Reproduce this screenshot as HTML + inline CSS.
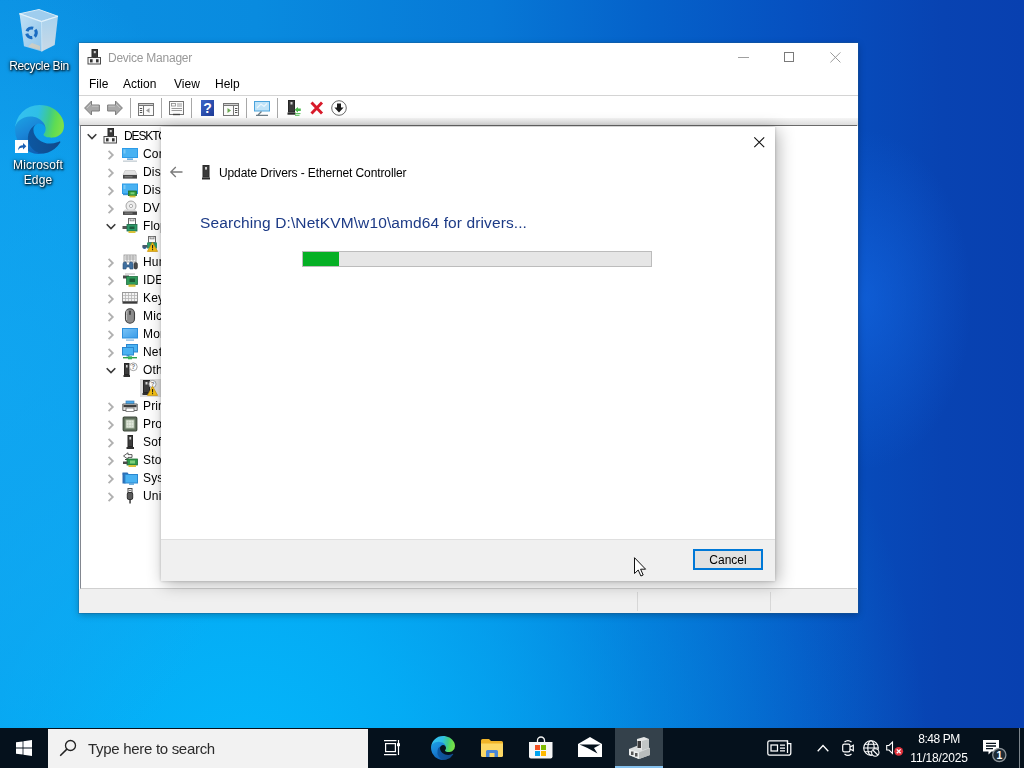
<!DOCTYPE html>
<html><head><meta charset="utf-8"><title>Device Manager</title>
<style>
*{box-sizing:border-box;margin:0;padding:0}
html,body{width:1024px;height:768px;overflow:hidden}
body{position:relative;font-family:"Liberation Sans",sans-serif;font-size:12px;color:#000;
background:
 radial-gradient(ellipse 110px 170px at 862px 300px,rgba(20,105,230,.6),rgba(20,105,230,0) 100%),
 radial-gradient(ellipse 260px 420px at 0px 380px,rgba(18,168,242,.78),rgba(18,168,242,.62) 50%,rgba(18,168,242,0) 100%),
 radial-gradient(ellipse 680px 720px at 250px 790px,rgba(4,184,252,.97),rgba(3,182,251,.8) 25%,rgba(2,176,248,.42) 60%,rgba(0,170,245,0) 100%),
 linear-gradient(90deg,#0b91e3 0,#098bdf 25%,#0778d6 48%,#0562ca 63%,#0650c0 78%,#0843b2 92%,#0840b0 100%);}
.abs{position:absolute}
svg{display:block;overflow:visible}
.dlabel{color:#fff;font-size:12px;text-align:center;text-shadow:1px 1px 2px rgba(0,0,0,.95),0 1px 3px rgba(0,0,0,.7),0 0 4px rgba(0,0,0,.5);line-height:15px;white-space:nowrap}
#dm{left:79px;top:43px;width:779px;height:570px;background:#fff;box-shadow:0 0 0 1px rgba(30,90,140,.35),0 2px 7px rgba(0,0,0,.28)}
#dm .title{left:29px;top:7px;color:#999;font-size:12px;line-height:16px;white-space:nowrap;letter-spacing:-.24px}
.menu span{position:absolute;top:0;line-height:16px;white-space:nowrap}
#tb{left:0;top:52px;width:779px;height:23px;border-top:1px solid #d4d4d4;background:#fff}
.sep{position:absolute;top:55px;width:1px;height:20px;background:#a8a8a8}
#gap{left:0;top:75px;width:779px;height:8px;background:linear-gradient(180deg,#f5f5f5,#d9d9d9)}
#tree{left:1px;top:82px;width:777px;height:464px;background:#fff;border-top:1px solid #6a6a6a;border-left:1px solid #828790;border-bottom:1px solid #d0d0d0}
#status{left:0;top:546px;width:779px;height:24px;background:#f0f0f0}
.row{position:absolute;height:18px;line-height:18px;font-size:12px;white-space:nowrap;letter-spacing:-.1px}
#dlg{left:161px;top:127px;width:614px;height:454px;background:#fff;box-shadow:3px 3px 16px rgba(0,0,0,.30),0 0 3px rgba(0,0,0,.22)}
#dlg .foot{left:0;top:412px;width:614px;height:42px;background:#f0f0f0;border-top:1px solid #dfdfdf}
#cancel{left:532px;top:422px;width:70px;height:21px;background:#e1e1e1;border:2px solid #0078d7;text-align:center;line-height:17px;font-size:12px;padding-top:1px}
#task{left:0;top:728px;width:1024px;height:40px;background:#05111c}
#search{left:48px;top:729px;width:320px;height:39px;background:#f2f2f2}
.clock{color:#fff;font-size:12px;line-height:15px;text-align:center;white-space:nowrap}
.dlabel,.title,.menu,.row,.clock,#cancel,.txt,#search span{will-change:transform}
</style></head><body>
<!-- desktop icons -->
<svg class="abs" style="left:18px;top:8px" width="42" height="46" viewBox="0 0 42 46"><defs><linearGradient id="rb1" x1="0" y1="0" x2="1" y2="1"><stop offset="0" stop-color="#bfe0f5"/><stop offset="1" stop-color="#8fc4ea"/></linearGradient>
<linearGradient id="rb2" x1="0" y1="0" x2="0" y2="1"><stop offset="0" stop-color="#a9d2ee"/><stop offset="1" stop-color="#c9d9e6"/></linearGradient></defs>
<path d="M1.500 5.800 L21 1.500 L40 8.300 L23.500 13.500 Z" fill="#9fcdee" stroke="#d5ebf8" stroke-width="1"/>
<path d="M1.500 5.800 L23.500 13.500 L23.800 43.500 L6 38.200 Z" fill="url(#rb1)"/>
<path d="M23.500 13.500 L40 8.300 L36.700 37 L23.800 43.500 Z" fill="url(#rb2)"/>
<path d="M1.500 5.800 L23.500 13.500 L40 8.300" fill="none" stroke="#e3f2fb" stroke-width="1.200"/>
<path d="M23.500 13.500 L23.800 43.500" stroke="#d7ebf8" stroke-width=".8"/>
<g fill="none" stroke="#1a6cc2" stroke-width="3.100"><path d="M8.99 23.16 A4.8 4.8 0 0 1 15.14 20.29"/><path d="M17.18 21.71 A4.8 4.8 0 0 1 16.59 28.48"/><path d="M14.33 29.53 A4.8 4.8 0 0 1 8.77 25.63"/></g>
<path d="M14 35 L22 38 L22 42 L10 38.500 Z" fill="#f1cfa5" opacity=".55"/></svg>
<div class="abs dlabel" style="left:0;top:59px;width:78px;letter-spacing:-.33px">Recycle Bin</div>
<svg class="abs" style="left:15px;top:105px" width="49" height="49" viewBox="0 0 256 256"><defs>
<linearGradient id="eg1" x1="58" y1="180" x2="237" y2="180" gradientUnits="userSpaceOnUse"><stop offset="0" stop-color="#0c59a4"/><stop offset="1" stop-color="#114a8b"/></linearGradient>
<linearGradient id="eg2" x1="20" y1="80" x2="120" y2="250" gradientUnits="userSpaceOnUse"><stop offset="0" stop-color="#1b9de2"/><stop offset=".4" stop-color="#1a86d8"/><stop offset="1" stop-color="#0f5fb4"/></linearGradient>
<linearGradient id="eg3" x1="10" y1="60" x2="250" y2="110" gradientUnits="userSpaceOnUse"><stop offset="0" stop-color="#35c1f1"/><stop offset=".45" stop-color="#2fbfe6"/><stop offset=".7" stop-color="#3fcb8a"/><stop offset=".85" stop-color="#5fdc52"/><stop offset="1" stop-color="#7ae04a"/></linearGradient>
</defs>
<g transform="translate(-4.630 -4.920)">
<path d="M235.680 195.460a93.730 93.730 0 01-10.540 4.710 101.870 101.870 0 01-35.900 6.460c-47.320 0-88.540-32.550-88.540-74.320A31.480 31.480 0 01117.130 105c-42.800 1.800-53.800 46.400-53.800 72.530 0 73.880 68.090 81.370 82.760 81.370 7.910 0 19.840-2.300 27-4.560l1.310-.44a128.340 128.340 0 0066.600-52.800 4 4 0 00-5.320-5.640z" fill="url(#eg1)"/>
<path d="M110.340 246.340A79.200 79.200 0 0187.600 225a80.720 80.720 0 0129.530-120c3.120-1.470 8.450-4.130 15.540-4a32.350 32.350 0 0125.690 13 31.880 31.880 0 016.360 18.660c0-.21 24.460-79.600-80-79.600-43.900 0-80 41.660-80 78.210a130.150 130.150 0 0012.110 56 128 128 0 00156.380 67.110 75.550 75.550 0 01-62.780-8z" fill="url(#eg2)"/>
<path d="M156.940 153.780c-.81 1.050-3.300 2.500-3.300 5.660 0 2.610 1.700 5.120 4.720 7.230 14.380 10 41.490 8.680 41.560 8.680a59.560 59.560 0 0030.270-8.350 61.380 61.380 0 0030.430-52.880c.26-22.410-8-37.310-11.340-43.910-21.190-41.450-66.930-65.290-116.670-65.290a128 128 0 00-128 126.200c.48-36.540 36.800-66.050 80-66.050 3.500 0 23.460.34 42 10.070 16.340 8.580 24.900 18.940 30.850 29.210 6.180 10.670 7.280 24.150 7.280 29.520s-2.740 13.330-7.800 19.910z" fill="url(#eg3)"/>
</g></svg>
<svg class="abs" style="left:15px;top:140px" width="13" height="13" viewBox="0 0 13 13"><rect width="13" height="13" fill="#fff"/><path d="M3 10.500 C3 7 5 5.200 8 5.200 L8 3 L11.300 6.300 L8 9.600 L8 7.400 C6 7.400 4.200 8 3 10.500 Z" fill="#1a5fb4"/></svg>
<div class="abs dlabel" style="left:0;top:158px;width:76px;letter-spacing:.15px">Microsoft<br>Edge</div>

<!-- Device Manager window -->
<div id="dm" class="abs">
 <svg class="abs" style="left:8px;top:6px" width="16" height="16" viewBox="0 0 16 16"><rect x="5" y="0.500" width="5.500" height="8" fill="#3a3a3a" stroke="#2a2a2a"/><rect x="6.800" y="2" width="2" height="2.200" fill="#cfcfcf"/>
<rect x="1" y="8.500" width="12.500" height="6.500" fill="#f4f4f4" stroke="#4a4a4a"/><rect x="3" y="10.200" width="2.600" height="3.200" fill="#333"/><rect x="9" y="10.200" width="2.600" height="3.200" fill="#333"/><rect x="6" y="6" width="3.500" height="3" fill="#3a3a3a"/></svg>
 <div class="abs title">Device Manager</div>
 <svg class="abs" style="left:659px;top:14px" width="12" height="2" viewBox="0 0 12 2"><rect width="11" height="1" y="0" fill="#a0a0a0"/></svg>
 <svg class="abs" style="left:705px;top:9px" width="11" height="11" viewBox="0 0 11 11"><rect x=".5" y=".5" width="9" height="9" fill="none" stroke="#7a7a7a"/></svg>
 <svg class="abs" style="left:751px;top:9px" width="11" height="11" viewBox="0 0 11 11"><path d="M.4 .4 L10.400 10.400 M10.400 .4 L.4 10.400" stroke="#9a9a9a" stroke-width="1"/></svg>
 <div class="abs menu" style="left:0;top:33px;width:300px;height:16px">
  <span style="left:10px">File</span><span style="left:44px">Action</span><span style="left:95px">View</span><span style="left:136px">Help</span>
 </div>
 <div id="tb" class="abs"></div>
 <svg class="abs" style="left:5px;top:57px" width="16" height="16" viewBox="0 0 16 16"><path d="M.6 8 L7.500 1 L7.500 5 L15.400 5 L15.400 11 L7.500 11 L7.500 15 Z" fill="#a8a8a8" stroke="#7e7e7e" stroke-width="1" stroke-linejoin="round"/><path d="M3 8 L7 4 M8 6.200 L14.500 6.200" stroke="#c4c4c4" stroke-width="1" fill="none"/></svg>
<svg class="abs" style="left:28px;top:57px" width="16" height="16" viewBox="0 0 16 16"><g transform="translate(16 0) scale(-1 1)"><path d="M.6 8 L7.500 1 L7.500 5 L15.400 5 L15.400 11 L7.500 11 L7.500 15 Z" fill="#a8a8a8" stroke="#7e7e7e" stroke-width="1" stroke-linejoin="round"/><path d="M3 8 L7 4 M8 6.200 L14.500 6.200" stroke="#c4c4c4" stroke-width="1" fill="none"/></g></svg>
<div class="sep" style="left:51px"></div>
<div class="sep" style="left:82px"></div>
<div class="sep" style="left:112px"></div>
<div class="sep" style="left:167px"></div>
<div class="sep" style="left:198px"></div>
<svg class="abs" style="left:59px;top:57px" width="16" height="16" viewBox="0 0 16 16"><rect x=".5" y="3.500" width="15" height="12" fill="#fbfbfb" stroke="#757575"/><rect x=".5" y="3.500" width="15" height="2" fill="#cfcfcf" stroke="#757575"/><path d="M5.500 6 V15" stroke="#757575"/><path d="M1.800 8.500 h2.400 M1.800 10.500 h2.400 M1.800 12.500 h2.400" stroke="#555" stroke-width="1"/><path d="M11.500 8 L8 10.500 L11.500 13 Z" fill="#9a9a9a"/></svg>
<svg class="abs" style="left:90px;top:57px" width="16" height="16" viewBox="0 0 16 16"><rect x=".5" y="1.500" width="14" height="13" fill="#fbfbfb" stroke="#757575"/><rect x="2.500" y="3.500" width="4" height="2.500" fill="none" stroke="#8a8a8a" stroke-width=".8"/><path d="M8 4 h5 M8 6 h5 M2.500 8.500 h10.500 M2.500 10.500 h10.500" stroke="#9a9a9a" stroke-width="1"/><path d="M4 14.500 h7" stroke="#444" stroke-width="1.400"/></svg>
<svg class="abs" style="left:122px;top:57px" width="13" height="16" viewBox="0 0 13 16"><defs><linearGradient id="hp" x1="0" y1="0" x2="1" y2="1"><stop offset="0" stop-color="#3c66c8"/><stop offset="1" stop-color="#1d3a96"/></linearGradient></defs><rect x="0" y="0" width="13" height="16" fill="url(#hp)"/><text x="6.500" y="13" font-family="Liberation Sans,sans-serif" font-weight="bold" font-size="14" fill="#fff" text-anchor="middle">?</text></svg>
<svg class="abs" style="left:144px;top:57px" width="16" height="16" viewBox="0 0 16 16"><rect x=".5" y="3.500" width="15" height="12" fill="#fbfbfb" stroke="#757575"/><rect x=".5" y="3.500" width="15" height="2" fill="#cfcfcf" stroke="#757575"/><path d="M10.500 6 V15" stroke="#757575"/><path d="M12 8.500 h2.400 M12 10.500 h2.400 M12 12.500 h2.400" stroke="#555" stroke-width="1"/><path d="M4.500 8 L8 10.500 L4.500 13 Z" fill="#6aa84f"/></svg>
<svg class="abs" style="left:175px;top:57px" width="16" height="16" viewBox="0 0 16 16"><rect x=".5" y="1.500" width="15" height="9.500" fill="#bfe3f8" stroke="#4aa3dc"/><path d="M3 8 L7 4 L10 6.500 L13 3.500" stroke="#eaf6fd" stroke-width="1.200" fill="none"/><path d="M7.500 11.500 L4 15 M2 15.300 h12" stroke="#6e7e88" stroke-width="1.300"/></svg>
<svg class="abs" style="left:208px;top:57px" width="16" height="16" viewBox="0 0 16 16"><rect x="1.500" y=".5" width="6" height="11.500" fill="#3a3a3a" stroke="#262626"/><rect x="3.500" y="2" width="2" height="2.500" fill="#d0d0d0"/><rect x=".5" y="12.500" width="8" height="2.200" fill="#2a2a2a"/><path d="M7.500 9.800 L11 7 L11 8.600 L13.800 8.600 L13.800 11 L11 11 L11 12.600 Z" fill="#4dbb4d"/><path d="M8 13.600 h5.500 M8 15.300 h4.500" stroke="#58c058" stroke-width="1"/></svg>
<svg class="abs" style="left:230px;top:57px" width="16" height="16" viewBox="0 0 16 16"><path d="M2.500 2.500 L13 13.500 M13 2.500 L2.500 13.500" stroke="#d81a2a" stroke-width="2.900" stroke-linecap="butt"/></svg>
<svg class="abs" style="left:252px;top:57px" width="16" height="16" viewBox="0 0 16 16"><circle cx="8" cy="8" r="7.300" fill="#fff" stroke="#6a6a6a" stroke-width="1"/><path d="M6 3.500 h4 v4 h2.600 L8 12.500 L3.400 7.500 H6 Z" fill="#1a1a1a"/></svg>
 <div id="gap" class="abs"></div>
 <div id="tree" class="abs"></div>
 <div id="status" class="abs">
  <div class="abs" style="left:558px;top:3px;width:1px;height:19px;background:#d7d7d7"></div>
  <div class="abs" style="left:691px;top:3px;width:1px;height:19px;background:#d7d7d7"></div>
 </div>
</div>
<svg class="abs" style="left:87px;top:131px" width="10" height="10" viewBox="0 0 10 10"><path d="M0.7 3.3 L5 7.6 L9.3 3.3" fill="none" stroke="#3a3a3a" stroke-width="1.6"/></svg>
<svg class="abs" style="left:103px;top:128px" width="16" height="16" viewBox="0 0 16 16"><rect x="5" y="0.500" width="5.500" height="8" fill="#3a3a3a" stroke="#2a2a2a"/><rect x="6.800" y="2" width="2" height="2.200" fill="#cfcfcf"/>
<rect x="1" y="8.500" width="12.500" height="6.500" fill="#f4f4f4" stroke="#4a4a4a"/><rect x="3" y="10.200" width="2.600" height="3.200" fill="#333"/><rect x="9" y="10.200" width="2.600" height="3.200" fill="#333"/><rect x="6" y="6" width="3.500" height="3" fill="#3a3a3a"/></svg>
<div class="row" style="left:124px;top:127px;letter-spacing:-1.1px">DESKTOP-7QK2M1A</div>
<svg class="abs" style="left:106px;top:150px" width="10" height="10" viewBox="0 0 10 10"><path d="M2.6 0.8 L6.8 5 L2.6 9.2" fill="none" stroke="#b0b0b0" stroke-width="1.8"/></svg>
<svg class="abs" style="left:122px;top:146px" width="16" height="16" viewBox="0 0 16 16"><rect x="0.5" y="2.500" width="15" height="9" fill="#49b2f2" stroke="#2d9be8"/><rect x="1.5" y="3.500" width="2" height="4" fill="#8fd3fa" opacity=".7"/><rect x="5" y="12.500" width="6" height="1.2" fill="#3a8fd0"/><rect x="1" y="14.500" width="14" height="1.300" fill="#c3ccd3"/></svg>
<div class="row" style="left:143px;top:145px;letter-spacing:.15px">Computer</div>
<svg class="abs" style="left:106px;top:168px" width="10" height="10" viewBox="0 0 10 10"><path d="M2.6 0.8 L6.8 5 L2.6 9.2" fill="none" stroke="#b0b0b0" stroke-width="1.8"/></svg>
<svg class="abs" style="left:122px;top:164px" width="16" height="16" viewBox="0 0 16 16"><path d="M3 6.5 L13 6.5 L15 11 L1 11 Z" fill="#e2e2e2" stroke="#bdbdbd" stroke-width=".6"/><rect x="1" y="11" width="14" height="3.6" fill="#454545"/><rect x="2.5" y="12.3" width="8" height="1" fill="#8a8a8a"/></svg>
<div class="row" style="left:143px;top:163px;letter-spacing:.15px">Disk drives</div>
<svg class="abs" style="left:106px;top:186px" width="10" height="10" viewBox="0 0 10 10"><path d="M2.6 0.8 L6.8 5 L2.6 9.2" fill="none" stroke="#b0b0b0" stroke-width="1.8"/></svg>
<svg class="abs" style="left:122px;top:182px" width="16" height="16" viewBox="0 0 16 16"><rect x="0.5" y="2" width="15" height="9.500" fill="#49b2f2" stroke="#2d9be8"/><rect x="1.5" y="3" width="2" height="4" fill="#8fd3fa" opacity=".7"/><rect x="1" y="12" width="5" height="1.2" fill="#3a8fd0"/><rect x="6.500" y="9" width="8" height="4.600" fill="#2f9a3a" stroke="#1d6e27" stroke-width=".8"/><rect x="7.500" y="13.600" width="6" height="1.800" fill="#d8c23a"/><rect x="8.500" y="10.300" width="4" height="2" fill="#7ed07a"/></svg>
<div class="row" style="left:143px;top:181px;letter-spacing:.15px">Display adapters</div>
<svg class="abs" style="left:106px;top:204px" width="10" height="10" viewBox="0 0 10 10"><path d="M2.6 0.8 L6.8 5 L2.6 9.2" fill="none" stroke="#b0b0b0" stroke-width="1.8"/></svg>
<svg class="abs" style="left:122px;top:200px" width="16" height="16" viewBox="0 0 16 16"><circle cx="9" cy="6" r="5" fill="#ededed" stroke="#9b9b9b" stroke-width=".9"/><circle cx="9" cy="6" r="1.6" fill="#fff" stroke="#9b9b9b" stroke-width=".8"/><path d="M3 9.5 L13 9.5 L15 11.5 L1 11.5 Z" fill="#d8d8d8"/><rect x="1" y="11.5" width="14" height="3.4" fill="#454545"/><rect x="2.5" y="12.6" width="8" height="1" fill="#8a8a8a"/></svg>
<div class="row" style="left:143px;top:199px;letter-spacing:.15px">DVD/CD-ROM drives</div>
<svg class="abs" style="left:106px;top:221px" width="10" height="10" viewBox="0 0 10 10"><path d="M0.7 3.3 L5 7.6 L9.3 3.3" fill="none" stroke="#3a3a3a" stroke-width="1.6"/></svg>
<svg class="abs" style="left:122px;top:218px" width="16" height="16" viewBox="0 0 16 16"><rect x="6.5" y="0.5" width="7" height="6" fill="#fff" stroke="#6a6a6a"/><rect x="8" y="0.5" width="4" height="2.4" fill="#d9d9d9" stroke="#6a6a6a" stroke-width=".6"/><rect x="0.5" y="8" width="5" height="3" fill="#555"/><rect x="5" y="6.5" width="10" height="6.5" fill="#2f9a6a" stroke="#1f6e4a" stroke-width=".8"/><rect x="7.5" y="8.5" width="5" height="2.5" fill="#1c5c3c"/><rect x="6.5" y="13" width="7" height="2" fill="#d8c23a"/></svg>
<div class="row" style="left:143px;top:217px;letter-spacing:.15px">Floppy drive controllers</div>
<svg class="abs" style="left:142px;top:236px" width="16" height="16" viewBox="0 0 16 16"><rect x="6.5" y="0.5" width="7" height="6" fill="#fff" stroke="#6a6a6a"/><rect x="8" y="0.5" width="4" height="2.4" fill="#d9d9d9" stroke="#6a6a6a" stroke-width=".6"/><rect x="5" y="6.5" width="10" height="6" fill="#2f9a6a"/><circle cx="2.5" cy="11" r="2" fill="#2d5f9a"/><rect x="0.5" y="9" width="5" height="2.5" fill="#4a5a6a"/><path d="M10.5 6.2 L15.6 15.4 L5.4 15.4 Z" fill="#f6c313" stroke="#c98f06" stroke-width=".7" stroke-linejoin="round"/><rect x="10" y="9" width="1.1" height="3.4" fill="#222"/><rect x="10" y="13.1" width="1.1" height="1.1" fill="#222"/></svg>
<div class="row" style="left:164px;top:235px;letter-spacing:.15px">Standard floppy disk controller</div>
<svg class="abs" style="left:106px;top:258px" width="10" height="10" viewBox="0 0 10 10"><path d="M2.6 0.8 L6.8 5 L2.6 9.2" fill="none" stroke="#b0b0b0" stroke-width="1.8"/></svg>
<svg class="abs" style="left:122px;top:254px" width="16" height="16" viewBox="0 0 16 16"><rect x="2" y="1" width="12" height="7" fill="#f2f2f2" stroke="#8f8f8f" stroke-width=".8"/><path d="M3 3h10M3 5h10M5 1v6M8 1v6M11 1v6" stroke="#9a9a9a" stroke-width=".7"/><path d="M1 15 L1 10 Q1 8 3 8 L4 8 L5 11 L7 11 L8 8 L9 8 Q11 8 11 10 L11 15 L8 15 L7.5 13 L4.5 13 L4 15 Z" fill="#3f6f9f" stroke="#2b4f77" stroke-width=".6"/><rect x="12" y="8.5" width="3.4" height="6.5" rx="1.6" fill="#4a4a4a" stroke="#2a2a2a" stroke-width=".6"/></svg>
<div class="row" style="left:143px;top:253px;letter-spacing:.15px">Human Interface Devices</div>
<svg class="abs" style="left:106px;top:276px" width="10" height="10" viewBox="0 0 10 10"><path d="M2.6 0.8 L6.8 5 L2.6 9.2" fill="none" stroke="#b0b0b0" stroke-width="1.8"/></svg>
<svg class="abs" style="left:122px;top:272px" width="16" height="16" viewBox="0 0 16 16"><rect x="3" y="1" width="10" height="2" fill="#d9d9d9"/><rect x="1" y="3.5" width="6" height="3" fill="#4a4a4a"/><rect x="4.5" y="4.5" width="11" height="8" fill="#2f9a5a" stroke="#1f6e3f" stroke-width=".8"/><rect x="7.5" y="6.5" width="5.5" height="3.5" fill="#1c5c36"/><rect x="6.5" y="12.5" width="7" height="2.3" fill="#d8c23a"/></svg>
<div class="row" style="left:143px;top:271px;letter-spacing:.15px">IDE ATA/ATAPI controllers</div>
<svg class="abs" style="left:106px;top:294px" width="10" height="10" viewBox="0 0 10 10"><path d="M2.6 0.8 L6.8 5 L2.6 9.2" fill="none" stroke="#b0b0b0" stroke-width="1.8"/></svg>
<svg class="abs" style="left:122px;top:290px" width="16" height="16" viewBox="0 0 16 16"><rect x="0.5" y="2.5" width="15" height="9" fill="#f3f3f3" stroke="#9a9a9a"/><path d="M1 5.5h14M1 8.5h14M3.5 3v8M6.5 3v8M9.500 3v8M12.500 3v8" stroke="#b5b5b5" stroke-width=".8"/><rect x="0.500" y="11.500" width="15" height="2.200" fill="#3c3c3c"/></svg>
<div class="row" style="left:143px;top:289px;letter-spacing:.15px">Keyboards</div>
<svg class="abs" style="left:106px;top:312px" width="10" height="10" viewBox="0 0 10 10"><path d="M2.6 0.8 L6.8 5 L2.6 9.2" fill="none" stroke="#b0b0b0" stroke-width="1.8"/></svg>
<svg class="abs" style="left:122px;top:308px" width="16" height="16" viewBox="0 0 16 16"><rect x="3.500" y="0.800" width="9" height="14.400" rx="4.500" fill="#8c8c8c" stroke="#3e3e3e" stroke-width="1.100"/><rect x="7.200" y="2.500" width="1.600" height="4.500" rx=".8" fill="#3a3a3a"/><path d="M5 2.500 Q4.300 6 4.600 12" stroke="#c9c9c9" stroke-width="1" fill="none"/></svg>
<div class="row" style="left:143px;top:307px;letter-spacing:.15px">Mice and other pointing devices</div>
<svg class="abs" style="left:106px;top:330px" width="10" height="10" viewBox="0 0 10 10"><path d="M2.6 0.8 L6.8 5 L2.6 9.2" fill="none" stroke="#b0b0b0" stroke-width="1.8"/></svg>
<svg class="abs" style="left:122px;top:326px" width="16" height="16" viewBox="0 0 16 16"><defs><linearGradient id="mg" x1="0" y1="0" x2="1" y2="1"><stop offset="0" stop-color="#79c4f7"/><stop offset="1" stop-color="#3a9ce8"/></linearGradient></defs><rect x="0.5" y="2.500" width="15" height="9.500" fill="url(#mg)" stroke="#2d8fdc"/><rect x="4" y="13.500" width="8" height="1.200" fill="#7fb4de"/></svg>
<div class="row" style="left:143px;top:325px;letter-spacing:.15px">Monitors</div>
<svg class="abs" style="left:106px;top:348px" width="10" height="10" viewBox="0 0 10 10"><path d="M2.6 0.8 L6.8 5 L2.6 9.2" fill="none" stroke="#b0b0b0" stroke-width="1.8"/></svg>
<svg class="abs" style="left:122px;top:344px" width="16" height="16" viewBox="0 0 16 16"><rect x="4.500" y="0.500" width="11" height="7.500" fill="#49b2f2" stroke="#2b86cf"/><rect x="0.500" y="3.500" width="11" height="7.500" fill="#49b2f2" stroke="#2b86cf"/><rect x="4.500" y="11" width="3" height="1.500" fill="#3a8fd0"/><rect x="1" y="13" width="14" height="1.400" fill="#2e9f4a"/><rect x="6" y="12.300" width="4" height="3" fill="#37b457"/></svg>
<div class="row" style="left:143px;top:343px;letter-spacing:.15px">Network adapters</div>
<svg class="abs" style="left:106px;top:365px" width="10" height="10" viewBox="0 0 10 10"><path d="M0.7 3.3 L5 7.6 L9.3 3.3" fill="none" stroke="#3a3a3a" stroke-width="1.6"/></svg>
<svg class="abs" style="left:122px;top:362px" width="16" height="16" viewBox="0 0 16 16"><rect x="2.500" y="1.500" width="4.500" height="11" fill="#3c3c3c" stroke="#262626"/><rect x="4" y="3" width="1.600" height="2.500" fill="#d5d5d5"/><rect x="1.500" y="13" width="6.500" height="2" fill="#2f2f2f"/><circle cx="11.300" cy="4.800" r="3.900" fill="#fff" stroke="#9a9a9a" stroke-width=".9"/><text x="11.300" y="7.100" font-size="6.500" font-family="Liberation Sans,sans-serif" text-anchor="middle" fill="#777" font-weight="bold">?</text></svg>
<div class="row" style="left:143px;top:361px;letter-spacing:.15px">Other devices</div>
<div class="abs" style="left:140px;top:379px;width:140px;height:18px;background:#dedede"></div>
<svg class="abs" style="left:142px;top:380px" width="16" height="16" viewBox="0 0 16 16"><rect x="1.500" y="0.500" width="6" height="12" fill="#3c3c3c" stroke="#262626"/><rect x="3.500" y="2" width="2" height="2.500" fill="#d5d5d5"/><rect x="0.500" y="13" width="8" height="2" fill="#2f2f2f"/><circle cx="10.500" cy="4" r="3.600" fill="#fff" stroke="#9a9a9a" stroke-width=".9"/><text x="10.500" y="6.200" font-size="6" font-family="Liberation Sans,sans-serif" text-anchor="middle" fill="#777" font-weight="bold">?</text><path d="M10.5 6.2 L15.6 15.4 L5.4 15.4 Z" fill="#f6c313" stroke="#c98f06" stroke-width=".7" stroke-linejoin="round"/><rect x="10" y="9" width="1.1" height="3.4" fill="#222"/><rect x="10" y="13.1" width="1.1" height="1.1" fill="#222"/></svg>
<div class="row" style="left:164px;top:379px;letter-spacing:.15px">Ethernet Controller</div>
<svg class="abs" style="left:106px;top:402px" width="10" height="10" viewBox="0 0 10 10"><path d="M2.6 0.8 L6.8 5 L2.6 9.2" fill="none" stroke="#b0b0b0" stroke-width="1.8"/></svg>
<svg class="abs" style="left:122px;top:398px" width="16" height="16" viewBox="0 0 16 16"><rect x="4" y="3" width="8" height="3.500" fill="#4aa8ea" stroke="#3b7fb8" stroke-width=".7"/><path d="M0.800 6 h14.400 v6.500 h-14.400 Z" fill="#e4e4e4" stroke="#555" stroke-width=".9"/><rect x="1.500" y="7" width="13" height="2.200" fill="#3e3e3e"/><rect x="4" y="10" width="8" height="3.500" fill="#fff" stroke="#6a6a6a" stroke-width=".8"/></svg>
<div class="row" style="left:143px;top:397px;letter-spacing:.15px">Print queues</div>
<svg class="abs" style="left:106px;top:420px" width="10" height="10" viewBox="0 0 10 10"><path d="M2.6 0.8 L6.8 5 L2.6 9.2" fill="none" stroke="#b0b0b0" stroke-width="1.8"/></svg>
<svg class="abs" style="left:122px;top:416px" width="16" height="16" viewBox="0 0 16 16"><rect x="1.200" y="1.200" width="13.600" height="13.600" rx="1" fill="#5f6f5c" stroke="#3f4b3c" stroke-width="1.200"/><rect x="3.800" y="3.800" width="8.400" height="8.400" fill="#dfe6da" stroke="#8a9c85" stroke-width=".9"/><path d="M6.500 4 V12 M9.500 4 V12 M4 6.500 H12 M4 9.500 H12" stroke="#c3cfbe" stroke-width=".6"/></svg>
<div class="row" style="left:143px;top:415px;letter-spacing:.15px">Processors</div>
<svg class="abs" style="left:106px;top:438px" width="10" height="10" viewBox="0 0 10 10"><path d="M2.6 0.8 L6.8 5 L2.6 9.2" fill="none" stroke="#b0b0b0" stroke-width="1.8"/></svg>
<svg class="abs" style="left:122px;top:434px" width="16" height="16" viewBox="0 0 16 16"><rect x="6" y="1.500" width="4.500" height="11" fill="#3c3c3c" stroke="#262626"/><rect x="7.400" y="3" width="1.700" height="2.500" fill="#d5d5d5"/><rect x="4.500" y="13" width="7.500" height="2" fill="#2f2f2f"/></svg>
<div class="row" style="left:143px;top:433px;letter-spacing:.15px">Software devices</div>
<svg class="abs" style="left:106px;top:456px" width="10" height="10" viewBox="0 0 10 10"><path d="M2.6 0.8 L6.8 5 L2.6 9.2" fill="none" stroke="#b0b0b0" stroke-width="1.8"/></svg>
<svg class="abs" style="left:122px;top:452px" width="16" height="16" viewBox="0 0 16 16"><path d="M1.500 4 L6 0.800 L6 2.600 L10 2.600 L10 5.400 L6 5.400 L6 7.200 Z" fill="#fff" stroke="#4a4a4a" stroke-width=".9"/><path d="M3 7.500 L9 7.500" stroke="#4a4a4a" stroke-width="1"/><rect x="5" y="7" width="10.500" height="6" fill="#2f9a4a" stroke="#1f6e33" stroke-width=".8"/><rect x="8" y="8.500" width="5" height="3" fill="#7ed07a"/><rect x="1" y="9.500" width="4.500" height="2.500" fill="#4a4a4a"/><rect x="6.500" y="13" width="7.500" height="2" fill="#d8c23a"/></svg>
<div class="row" style="left:143px;top:451px;letter-spacing:.15px">Storage controllers</div>
<svg class="abs" style="left:106px;top:474px" width="10" height="10" viewBox="0 0 10 10"><path d="M2.6 0.8 L6.8 5 L2.6 9.2" fill="none" stroke="#b0b0b0" stroke-width="1.8"/></svg>
<svg class="abs" style="left:122px;top:470px" width="16" height="16" viewBox="0 0 16 16"><path d="M0.500 2.500 h5 l1.500 2 h-6.500 Z" fill="#2d6fb5"/><rect x="0.500" y="3.500" width="3" height="10" fill="#2d6fb5"/><rect x="3" y="4.500" width="12.500" height="8.500" fill="#49b2f2" stroke="#2b86cf"/><rect x="7" y="13.500" width="5" height="1.200" fill="#3a8fd0"/></svg>
<div class="row" style="left:143px;top:469px;letter-spacing:.15px">System devices</div>
<svg class="abs" style="left:106px;top:492px" width="10" height="10" viewBox="0 0 10 10"><path d="M2.6 0.8 L6.8 5 L2.6 9.2" fill="none" stroke="#b0b0b0" stroke-width="1.8"/></svg>
<svg class="abs" style="left:122px;top:488px" width="16" height="16" viewBox="0 0 16 16"><rect x="6" y="0.500" width="4" height="4" fill="#fff" stroke="#4a4a4a"/><rect x="6.900" y="1.800" width=".8" height="1.300" fill="#4a4a4a"/><rect x="8.300" y="1.800" width=".8" height="1.300" fill="#4a4a4a"/><rect x="5.300" y="4.500" width="5.400" height="7" rx="1.500" fill="#5a5a5a" stroke="#2f2f2f"/><rect x="7.300" y="11.500" width="1.500" height="4" fill="#3a3a3a"/></svg>
<div class="row" style="left:143px;top:487px;letter-spacing:.15px">Universal Serial Bus controllers</div>

<!-- Update Drivers dialog -->
<div id="dlg" class="abs">
 <svg class="abs" style="left:593px;top:10px" width="10" height="10" viewBox="0 0 10 10"><path d="M.3 .3 L10.200 10.200 M10.200 .3 L.3 10.200" stroke="#111" stroke-width="1.100"/></svg>
 <svg class="abs" style="left:9px;top:39px" width="13" height="12" viewBox="0 0 13 12"><path d="M12.500 6 L1 6 M5.800 1 L.8 6 L5.800 11" fill="none" stroke="#7a7a7a" stroke-width="1.300"/></svg>
 <svg class="abs" style="left:41px;top:38px" width="8" height="15" viewBox="0 0 8 15"><rect x="1" y="0.500" width="6" height="11.500" fill="#3a3a3a" stroke="#2a2a2a"/><rect x="3" y="2" width="2" height="2.600" fill="#cfcfcf"/><rect x="0" y="12.500" width="8" height="2" fill="#2a2a2a"/></svg>
 <div class="abs txt" style="left:58px;top:38px;line-height:16px;font-size:12px;white-space:nowrap;letter-spacing:-.11px">Update Drivers - Ethernet Controller</div>
 <div class="abs txt" style="left:39px;top:85px;line-height:22px;font-size:15.5px;color:#1c3a86;white-space:nowrap;letter-spacing:.11px">Searching D:\NetKVM\w10\amd64 for drivers...</div>
 <div class="abs" style="left:141px;top:124px;width:350px;height:16px;background:#e6e6e6;border:1px solid #bcbcbc"><div style="width:36px;height:14px;background:#06b025"></div></div>
 <div class="abs foot"></div>
 <div id="cancel" class="abs">Cancel</div>
</div>

<!-- taskbar -->
<div id="task" class="abs"></div>
<svg class="abs" style="left:16px;top:740px" width="16" height="16" viewBox="0 0 16 16"><path d="M0 2.300 L6.600 1.400 V7.600 H0 Z M7.400 1.300 L16 0 V7.600 H7.400 Z M0 8.400 H6.600 V14.600 L0 13.700 Z M7.400 8.400 H16 V16 L7.400 14.700 Z" fill="#fff"/></svg>
<div id="search" class="abs"><svg class="abs" style="left:11px;top:10px" width="18" height="18" viewBox="0 0 18 18"><circle cx="11.500" cy="6.500" r="5" fill="none" stroke="#222" stroke-width="1.300"/><path d="M7.900 10.100 L1.200 16.800" stroke="#222" stroke-width="1.500"/></svg><span class="abs" style="left:40px;top:10px;font-size:15px;line-height:20px;color:#2b2b2b;white-space:nowrap;letter-spacing:-.3px">Type here to search</span></div>
<svg class="abs" style="left:383px;top:739px" width="18" height="17" viewBox="0 0 18 17"><g fill="none" stroke="#fff" stroke-width="1.200"><rect x="2.600" y="4.600" width="9.800" height="8"/><path d="M1 1.600 H13.500 M1 15.600 H13.500 M15.500 1 V16"/></g><rect x="14" y="4.200" width="3" height="3" fill="#fff"/></svg>
<svg class="abs" style="left:431px;top:736px" width="24" height="24" viewBox="0 0 256 256"><defs>
<linearGradient id="tg1" x1="58" y1="180" x2="237" y2="180" gradientUnits="userSpaceOnUse"><stop offset="0" stop-color="#0c59a4"/><stop offset="1" stop-color="#114a8b"/></linearGradient>
<linearGradient id="tg2" x1="20" y1="80" x2="120" y2="250" gradientUnits="userSpaceOnUse"><stop offset="0" stop-color="#1b9de2"/><stop offset=".4" stop-color="#1a86d8"/><stop offset="1" stop-color="#0f5fb4"/></linearGradient>
<linearGradient id="tg3" x1="10" y1="60" x2="250" y2="110" gradientUnits="userSpaceOnUse"><stop offset="0" stop-color="#35c1f1"/><stop offset=".45" stop-color="#2fbfe6"/><stop offset=".7" stop-color="#3fcb8a"/><stop offset=".85" stop-color="#5fdc52"/><stop offset="1" stop-color="#7ae04a"/></linearGradient>
</defs>
<g transform="translate(-4.630 -4.920)">
<path d="M235.680 195.460a93.730 93.730 0 01-10.540 4.710 101.870 101.870 0 01-35.900 6.460c-47.320 0-88.540-32.550-88.540-74.320A31.480 31.480 0 01117.130 105c-42.800 1.800-53.800 46.400-53.800 72.530 0 73.880 68.090 81.370 82.760 81.370 7.910 0 19.840-2.300 27-4.560l1.310-.44a128.340 128.340 0 0066.600-52.800 4 4 0 00-5.320-5.640z" fill="url(#tg1)"/>
<path d="M110.340 246.340A79.200 79.200 0 0187.600 225a80.720 80.720 0 0129.530-120c3.120-1.470 8.450-4.130 15.540-4a32.350 32.350 0 0125.690 13 31.880 31.880 0 016.360 18.660c0-.21 24.460-79.600-80-79.600-43.900 0-80 41.660-80 78.210a130.150 130.150 0 0012.110 56 128 128 0 00156.380 67.110 75.550 75.550 0 01-62.780-8z" fill="url(#tg2)"/>
<path d="M156.940 153.780c-.81 1.050-3.300 2.500-3.300 5.660 0 2.610 1.700 5.120 4.720 7.230 14.380 10 41.490 8.680 41.560 8.680a59.560 59.560 0 0030.270-8.350 61.380 61.380 0 0030.430-52.880c.26-22.410-8-37.310-11.340-43.910-21.190-41.450-66.930-65.290-116.670-65.290a128 128 0 00-128 126.200c.48-36.540 36.800-66.050 80-66.050 3.500 0 23.460.34 42 10.070 16.340 8.580 24.900 18.940 30.850 29.210 6.180 10.670 7.280 24.150 7.280 29.520s-2.740 13.330-7.800 19.910z" fill="url(#tg3)"/>
</g></svg>
<svg class="abs" style="left:481px;top:738px" width="22" height="20" viewBox="0 0 22 20"><path d="M0 2.500 Q0 1 1.500 1 H8 L10 3 H20.500 Q22 3 22 4.500 V18 H0 Z" fill="#f0b429"/><path d="M0 5.500 H22 V17.500 Q22 19 20.500 19 H1.500 Q0 19 0 17.500 Z" fill="#fcd866"/><path d="M5 19 V13.500 Q5 12 6.500 12 H15.500 Q17 12 17 13.500 V19 H13.500 V15 H8.500 V19 Z" fill="#4a86d6"/></svg>
<svg class="abs" style="left:529px;top:735px" width="24" height="24" viewBox="0 0 24 24"><path d="M8.500 7 V5.500 A3.500 3.500 0 0 1 15.500 5.500 V7" fill="none" stroke="#f3f3f3" stroke-width="1.300"/><path d="M0 7 H23.500 V21.500 Q23.500 23.500 21.500 23.500 H2 Q0 23.500 0 21.500 Z" fill="#f6f6f6"/><rect x="6" y="10" width="5" height="5" fill="#f25022"/><rect x="12" y="10" width="5" height="5" fill="#7fba00"/><rect x="6" y="16" width="5" height="5" fill="#00a4ef"/><rect x="12" y="16" width="5" height="5" fill="#ffb900"/></svg>
<svg class="abs" style="left:578px;top:737px" width="24" height="20" viewBox="0 0 24 20"><path d="M0 7 L12 0 L24 7 V20 H0 Z" fill="#fff"/><path d="M1.500 7.500 L22.500 7.500 L16 11 L19.500 16.500 L9 10.800 Z" fill="#05111c"/></svg>
<div class="abs" style="left:615px;top:728px;width:48px;height:40px;background:#34414b"></div><div class="abs" style="left:615px;top:766px;width:48px;height:2px;background:#85c1ee"></div>
<svg class="abs" style="left:627px;top:736px" width="25" height="24" viewBox="0 0 25 24"><path d="M2 13 L12 9 L23 12 L23 19 L12 23 L2 19 Z" fill="#d9dcdc"/><path d="M2 13 L12 16.500 L12 23 L2 19 Z" fill="#eceeee"/><path d="M12 16.500 L23 12 L23 19 L12 23 Z" fill="#b9bdbd"/><path d="M10 3 L17 1 L22 3 L22 12 L15 14.500 L10 12.500 Z" fill="#e4e6e6"/><path d="M15 5 L22 3 L22 12 L15 14.500 Z" fill="#c2c6c6"/><rect x="10.500" y="5" width="3.500" height="7" fill="#3b3b3b"/><rect x="4" y="15.500" width="2.500" height="3.500" fill="#555"/><rect x="8" y="17" width="2.500" height="3.500" fill="#555"/></svg>
<svg class="abs" style="left:767px;top:740px" width="25" height="16" viewBox="0 0 25 16"><g fill="none" stroke="#fff" stroke-width="1.250"><path d="M20.500 .8 H2.500 Q.8 .8 .8 2.500 V13.500 Q.8 15.200 2.500 15.200 H21.500 Q23.800 15.200 23.800 13 V3.500 H20.500 Z"/><path d="M20.500 .8 V13"/><rect x="4" y="5" width="6.500" height="6"/><path d="M13 5.200 H18 M13 8 H18 M13 10.800 H18"/></g></svg>
<svg class="abs" style="left:817px;top:744px" width="12" height="8" viewBox="0 0 12 8"><path d="M.7 7.300 L6 1.500 L11.300 7.300" fill="none" stroke="#fff" stroke-width="1.300"/></svg>
<svg class="abs" style="left:842px;top:739px" width="12" height="18" viewBox="0 0 12 18"><g fill="none" stroke="#fff" stroke-width="1.200"><path d="M2.500 3 A5.500 5.500 0 0 1 9.500 3"/><path d="M2.500 15 A5.500 5.500 0 0 0 9.500 15"/><rect x=".7" y="5.200" width="7.300" height="7.600" rx="1.600"/><path d="M8 8 L11.300 6.200 V11.800 L8 10"/></g></svg>
<svg class="abs" style="left:863px;top:740px" width="17" height="17" viewBox="0 0 17 17"><g fill="none" stroke="#fff" stroke-width="1.100"><circle cx="8" cy="8" r="7.300"/><ellipse cx="8" cy="8" rx="3.200" ry="7.300"/><path d="M.7 8 H15.300 M1.800 4.200 H14.200 M1.800 11.800 H14.200"/></g><circle cx="12.300" cy="12.500" r="3.700" fill="#05111c" stroke="#fff" stroke-width="1.100"/><path d="M9.800 10 L14.800 15" stroke="#fff" stroke-width="1.100"/></svg>
<svg class="abs" style="left:886px;top:741px" width="18" height="16" viewBox="0 0 18 16"><path d="M.7 4.500 H3 L6.500 1 V12.500 L3 9 H.7 Z" fill="none" stroke="#fff" stroke-width="1.100"/><circle cx="12.700" cy="10.300" r="4.400" fill="#e0323c"/><path d="M10.800 8.400 L14.600 12.200 M14.600 8.400 L10.800 12.200" stroke="#fff" stroke-width="1.300"/></svg>
<div class="abs clock" style="left:909px;top:732px;width:60px;letter-spacing:-.45px">8:48 PM</div>
<div class="abs clock" style="left:904px;top:751px;width:70px;letter-spacing:-.18px">11/18/2025</div>
<svg class="abs" style="left:983px;top:740px" width="24" height="23" viewBox="0 0 24 23"><path d="M0 0 H16 V11.500 H8.500 L5.500 14.500 V11.500 H0 Z" fill="#fff"/><path d="M3 3.300 H13 M3 6 H13 M3 8.700 H10" stroke="#05111c" stroke-width="1.300"/><circle cx="16.300" cy="15" r="6.600" fill="#1d2a34" stroke="#8d9499" stroke-width="1.300"/><text x="16.300" y="19" font-family="Liberation Sans,sans-serif" font-size="10.500" font-weight="bold" fill="#fff" text-anchor="middle">1</text></svg>
<div class="abs" style="left:1019px;top:728px;width:1px;height:40px;background:#7c858c"></div>
<!-- mouse cursor -->
<svg class="abs" style="left:634px;top:557px" width="13" height="20" viewBox="0 0 13 20"><path d="M.5 .7 L.5 16.500 L4.200 13 L6.900 19 L9.200 18 L6.600 12.200 L11.600 12.200 Z" fill="#fff" stroke="#111" stroke-width="1" stroke-linejoin="miter"/></svg>

</body></html>
